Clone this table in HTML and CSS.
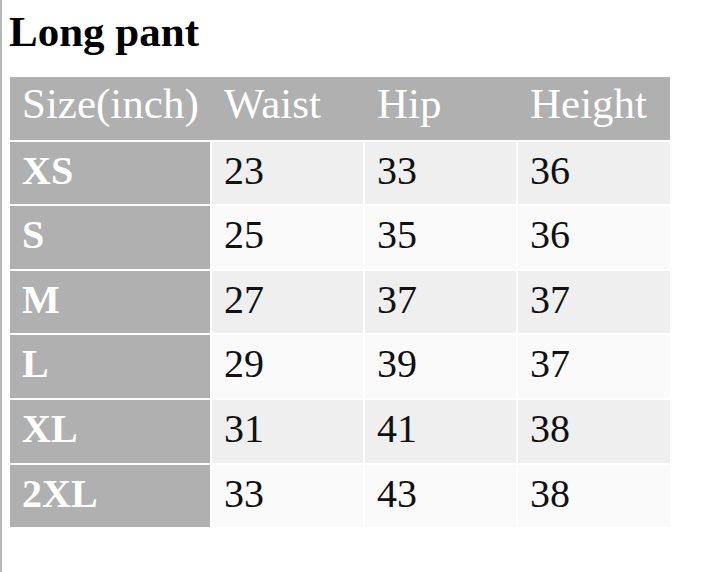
FILE: index.html
```html
<!DOCTYPE html>
<html lang="en">
<head>
<meta charset="utf-8">
<title>Long pant</title>
<link rel="stylesheet" href="styles.css">
</head>
<body>
<h2 class="title">Long pant</h2>
<table class="size-table">
  <colgroup>
    <col class="c-size">
    <col class="c-num">
    <col class="c-num">
    <col class="c-last">
  </colgroup>
  <thead>
    <tr class="head-row">
      <th>Size(inch)</th>
      <th>Waist</th>
      <th>Hip</th>
      <th>Height</th>
    </tr>
  </thead>
  <tbody>
    <tr class="odd"><th>XS</th><td>23</td><td>33</td><td>36</td></tr>
    <tr class="even"><th>S</th><td>25</td><td>35</td><td>36</td></tr>
    <tr class="odd"><th>M</th><td>27</td><td>37</td><td>37</td></tr>
    <tr class="even"><th>L</th><td>29</td><td>39</td><td>37</td></tr>
    <tr class="odd"><th>XL</th><td>31</td><td>41</td><td>38</td></tr>
    <tr class="even"><th>2XL</th><td>33</td><td>43</td><td>38</td></tr>
  </tbody>
</table>
</body>
</html>
```

FILE: styles.css
```css
html {
  border-left: 2px solid #b8b8b8;
  min-height: 100%;
  background: #ffffff;
}
body {
  margin: 7px 8px 8px 6px;
  font-family: "Liberation Serif", "Times New Roman", serif;
  color: #000000;
}
.title {
  margin: 0 0 18px 1px;
  font-size: 43px;
  line-height: 50px;
  font-weight: bold;
}
.size-table {
  table-layout: fixed;
  width: 664px;
  border-collapse: separate;
  border-spacing: 2px;
}
.c-size { width: 200px; }
.c-num { width: 151px; }
.c-last { width: 152px; }
.size-table tr {
  height: 62.6px;
}
.size-table th,
.size-table td {
  padding: 5px 0 0 12px;
  text-align: left;
  vertical-align: top;
  white-space: nowrap;
}
.head-row th {
  background: #b0b0b0;
  color: #ffffff;
  font-weight: normal;
  font-size: 43px;
  line-height: 48px;
  padding-top: 3px;
}
.head-row th:not(:last-child) {
  box-shadow: 2px 0 0 #b0b0b0;
}
tbody th {
  background: #b0b0b0;
  color: #ffffff;
  font-weight: bold;
  font-size: 40px;
  line-height: 48px;
  padding-left: 13px;
}
tbody td {
  font-size: 40px;
  line-height: 48px;
  color: #111111;
  padding-left: 11px;
}
.odd td { background: #efefef; }
.even td { background: #fafafa; }
```
